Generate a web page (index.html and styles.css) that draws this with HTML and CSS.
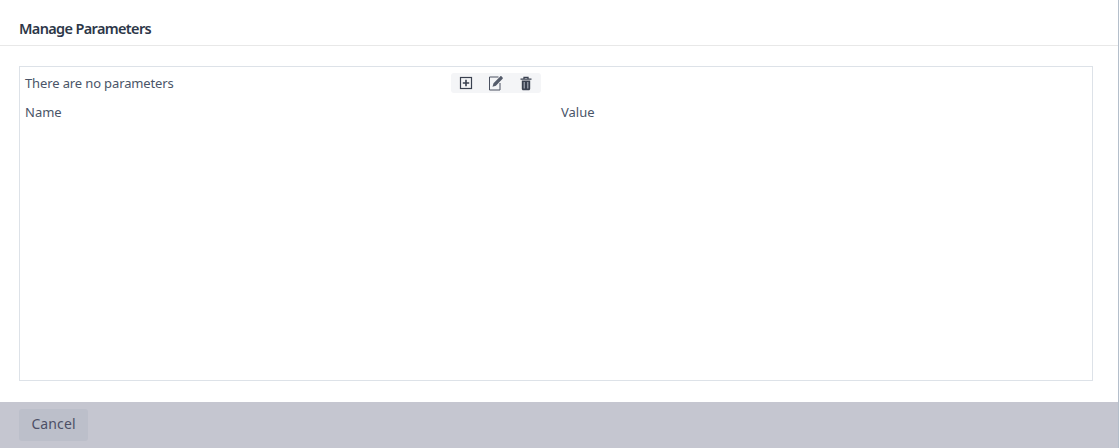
FILE: index.html
```html
<!DOCTYPE html>
<html lang="en">
<head>
    <meta charset="UTF-8">
    <title>Manage Parameters</title>
    <link rel="stylesheet" href="styles.css">
</head>
<body>
    <div class="dialog">
        <div class="dialog-header">Manage Parameters</div>
        <div class="dialog-body">
            <div class="panel">
                <div class="panel-top">
                    <div class="status">There are no parameters</div>
                    <div class="toolbar">
                        <button class="tool" aria-label="Add">
                            <svg width="14" height="14" viewBox="0 0 14 14"><rect x="1.5" y="1.5" width="11" height="11" fill="none" stroke="#3a4150" stroke-width="1.2"/><path d="M7 3.8v6.4M3.8 7h6.4" stroke="#3a4150" stroke-width="1.6"/></svg>
                        </button>
                        <button class="tool" aria-label="Edit">
                            <svg width="16" height="16" viewBox="0 0 16 16"><path d="M10.5 2H1.5v13H12V8" fill="none" stroke="#4a5160" stroke-width="1"/><path d="M4.5 11.8l1-3.6L12.2 1.4c.4-.4 1-.4 1.4 0l1 1c.4.4.4 1 0 1.4L7.9 10.7z" fill="#555c6b"/></svg>
                        </button>
                        <button class="tool" aria-label="Delete">
                            <svg width="14" height="15" viewBox="0 0 14 15"><path d="M1.5 3.2h11M5 3V1.3h4V3" fill="none" stroke="#3a4150" stroke-width="1.3"/><path d="M2.8 4.5h8.4v8.3c0 .9-.6 1.5-1.5 1.5H4.3c-.9 0-1.5-.6-1.5-1.5z" fill="#3a4150"/><path d="M5.2 6v6.4M8.8 6v6.4" stroke="#aab0bb" stroke-width="1.1"/></svg>
                        </button>
                    </div>
                </div>
                <div class="columns">
                    <div class="col-name">Name</div>
                    <div class="col-value">Value</div>
                </div>
            </div>
        </div>
        <div class="dialog-footer">
            <button class="cancel">Cancel</button>
        </div>
    </div>
</body>
</html>
```

FILE: styles.css
```css
html, body {
    height: 100%;
}
body {
    margin: 0;
    background-color: #fff;
    font-family: "Noto Sans", sans-serif;
    font-size: 13px;
    color: #4a5568;
}
.dialog {
    display: flex;
    flex-direction: column;
    height: 100%;
    box-sizing: border-box;
    border-right: 1px solid #b4bfcb;
}
.dialog-header {
    height: 45px;
    padding-left: 19px;
    line-height: 57px;
    font-size: 14.5px;
    font-weight: 600;
    letter-spacing: -0.65px;
    color: #2d3748;
    border-bottom: 1px solid #e8e8e8;
    overflow: hidden;
}
.dialog-body {
    flex: 1;
    padding: 20px 25px 21px 19px;
}
.panel {
    box-sizing: border-box;
    height: 315px;
    border: 1px solid #dde2e8;
    padding: 5px;
}
.panel-top {
    display: flex;
    align-items: center;
    height: 22px;
    letter-spacing: -0.13px;
}
.status {
    width: 426px;
}
.toolbar {
    display: flex;
    background-color: #f4f5f7;
    border-radius: 3px;
    height: 20px;
}
.tool {
    width: 30px;
    height: 20px;
    padding: 0;
    border: none;
    background: none;
    display: flex;
    align-items: center;
    justify-content: center;
}
.columns {
    display: flex;
    margin-top: 9px;
    line-height: 18px;
}
.col-name {
    width: 536px;
}
.dialog-footer {
    height: 46px;
    box-sizing: border-box;
    padding: 7px 19px;
    background-color: #c5c6d0;
}
.cancel {
    width: 69px;
    height: 32px;
    padding: 0 0 3px;
    border: none;
    border-radius: 3px;
    background-color: #bcbfca;
    color: #4c4f66;
    font-family: "Noto Sans", sans-serif;
    font-size: 14px;
    letter-spacing: 0.1px;
}
```
